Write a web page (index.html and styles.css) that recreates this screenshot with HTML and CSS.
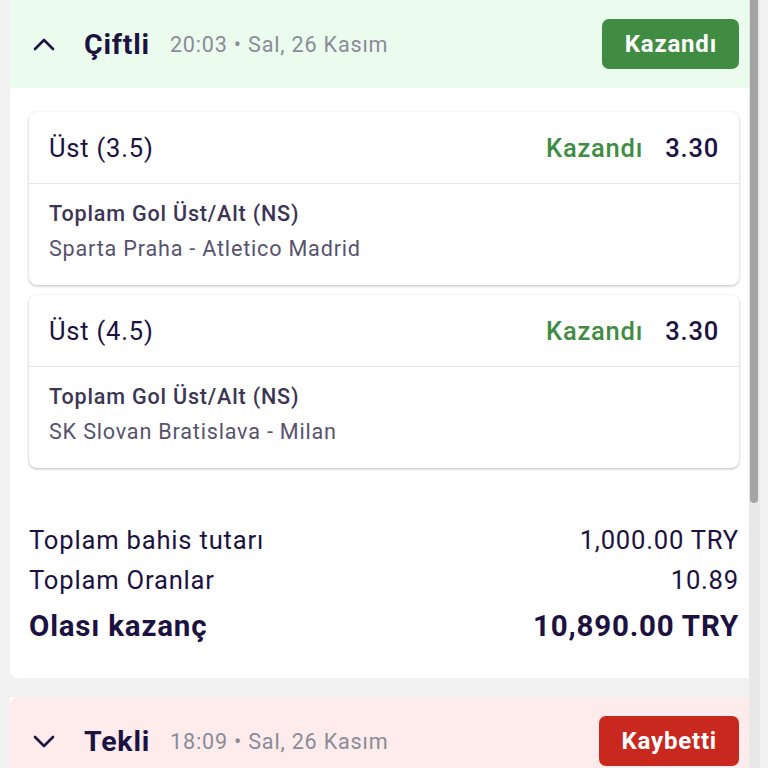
FILE: index.html
```html
<!DOCTYPE html>
<html lang="tr">
<head>
    <meta charset="UTF-8">
    <meta name="viewport" content="width=device-width, initial-scale=1.0">
    <title>Bahislerim</title>
    <link rel="stylesheet" href="styles.css">
</head>
<body>
    <div class="screen">
        <div class="feed">
            <div class="bet-card">
                <div class="bet-header won">
                    <svg class="chevron" width="22" height="14" viewBox="0 0 22 14">
                        <path d="M2 12 L11 3 L20 12" fill="none" stroke="#1c1242" stroke-width="2.6" stroke-linecap="round" stroke-linejoin="round"/>
                    </svg>
                    <span class="bet-type">Çiftli</span>
                    <span class="bet-time">20:03 • Sal, 26 Kasım</span>
                    <span class="status-badge won-badge">Kazandı</span>
                </div>

                <div class="bet-body">
                    <div class="selection">
                        <div class="selection-top">
                            <span class="pick">Üst (3.5)</span>
                            <span class="pick-result">Kazandı</span>
                            <span class="pick-odds">3.30</span>
                        </div>
                        <div class="selection-info">
                            <div class="market">Toplam Gol Üst/Alt (NS)</div>
                            <div class="match">Sparta Praha - Atletico Madrid</div>
                        </div>
                    </div>

                    <div class="selection">
                        <div class="selection-top">
                            <span class="pick">Üst (4.5)</span>
                            <span class="pick-result">Kazandı</span>
                            <span class="pick-odds">3.30</span>
                        </div>
                        <div class="selection-info">
                            <div class="market">Toplam Gol Üst/Alt (NS)</div>
                            <div class="match">SK Slovan Bratislava - Milan</div>
                        </div>
                    </div>

                    <div class="summary">
                        <div class="summary-row">
                            <span>Toplam bahis tutarı</span>
                            <span>1,000.00 TRY</span>
                        </div>
                        <div class="summary-row">
                            <span>Toplam Oranlar</span>
                            <span>10.89</span>
                        </div>
                        <div class="summary-row total">
                            <span>Olası kazanç</span>
                            <span>10,890.00 TRY</span>
                        </div>
                    </div>
                </div>
            </div>

            <div class="bet-card">
                <div class="bet-header lost">
                    <svg class="chevron" width="22" height="14" viewBox="0 0 22 14">
                        <path d="M2 3 L11 12 L20 3" fill="none" stroke="#1c1242" stroke-width="2.6" stroke-linecap="round" stroke-linejoin="round"/>
                    </svg>
                    <span class="bet-type">Tekli</span>
                    <span class="bet-time">18:09 • Sal, 26 Kasım</span>
                    <span class="status-badge lost-badge">Kaybetti</span>
                </div>
                <div class="bet-body collapsed-space"></div>
            </div>
        </div>

        <div class="scrollbar">
            <div class="scroll-thumb"></div>
        </div>
    </div>
</body>
</html>
```

FILE: styles.css
```css
body {
    margin: 0;
    padding: 0;
    background-color: #f0f1f0;
    font-family: Roboto, "Noto Sans", Arial, sans-serif;
    letter-spacing: 0.05em;
    color: #1c1242;
}

.screen {
    position: relative;
    height: 768px;
    overflow: hidden;
}

.feed {
    display: flex;
    flex-direction: column;
    gap: 19px;
    padding: 0 10px;
}

.bet-card {
    background-color: #fff;
    border-radius: 0 0 8px 8px;
}

.bet-header {
    display: flex;
    align-items: center;
    height: 88px;
    padding: 0 19px 0 23px;
}

.won {
    background-color: #ebfcee;
}

.lost {
    background-color: #fdeceb;
    border-radius: 8px 8px 0 0;
}

.chevron {
    margin-right: 29px;
}

.bet-type {
    font-size: 28.5px;
    font-weight: 700;
    margin-right: 20px;
}

.bet-time {
    font-size: 21.6px;
    color: #8b8b99;
}

.status-badge {
    margin-left: auto;
    height: 50px;
    line-height: 50px;
    padding: 0 22px 0 23px;
    border-radius: 7px;
    color: #fff;
    font-size: 24px;
    font-weight: 700;
}

.won-badge {
    background-color: #3f8c42;
}

.lost-badge {
    background-color: #c9281f;
}

.bet-body {
    padding: 24px 19px 24px;
}

.collapsed-space {
    height: 400px;
}

.selection {
    background-color: #fff;
    border-radius: 8px;
    box-shadow: 0 1px 3px rgba(0, 0, 0, 0.28);
    margin-bottom: 10px;
}

.selection-top {
    display: flex;
    align-items: center;
    height: 71px;
    padding: 0 20px 0 20px;
    border-bottom: 1px solid #e6e6ea;
    font-size: 25.5px;
}

.pick {
    flex: 1;
}

.pick-result {
    color: #3f8c42;
    font-weight: 500;
    margin-right: 22px;
}

.pick-odds {
    font-weight: 500;
}

.selection-info {
    padding: 12px 20px 19px;
    font-size: 21.6px;
    line-height: 35px;
}

.market {
    font-weight: 500;
    color: #3b3656;
}

.match {
    color: #57536f;
}

.summary {
    padding-top: 42px;
}

.summary-row {
    display: flex;
    justify-content: space-between;
    font-size: 25.6px;
    line-height: 40px;
}

.summary-row.total {
    font-size: 29.5px;
    font-weight: 700;
    line-height: 52px;
    margin-bottom: 2px;
}

.scrollbar {
    position: absolute;
    top: 0;
    left: 749px;
    width: 11px;
    height: 768px;
    background-color: #e8e8e8;
}

.scroll-thumb {
    width: 8px;
    height: 503px;
    margin-left: 1px;
    background-color: #a4a4a4;
    border-radius: 0 0 4px 4px;
}
```
